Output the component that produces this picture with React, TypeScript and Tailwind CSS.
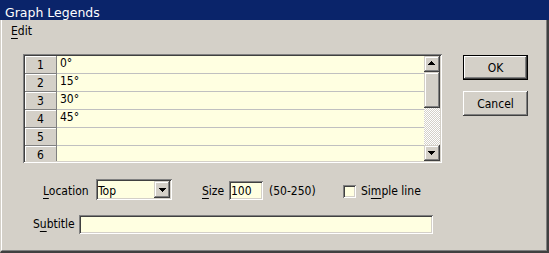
import React from "react";

const SUNKEN =
  "shadow-[inset_1px_1px_#808080,inset_-1px_-1px_#ffffff,inset_2px_2px_#404040,inset_-2px_-2px_#d4d0c8]";
const RAISED_BTN =
  "shadow-[inset_-1px_-1px_#404040,inset_1px_1px_#ffffff,inset_-2px_-2px_#808080,inset_2px_2px_#d4d0c8]";
const RAISED_SCROLL =
  "shadow-[inset_-1px_-1px_#404040,inset_1px_1px_#d4d0c8,inset_-2px_-2px_#808080,inset_2px_2px_#ffffff]";

const UpArrow = () => (
  <svg width="7" height="4" viewBox="0 0 7 4" className="block">
    <path d="M3 0H4V1H5V2H6V3H7V4H0V3H1V2H2V1H3Z" fill="#000" />
  </svg>
);

const DownArrow = () => (
  <svg width="7" height="4" viewBox="0 0 7 4" className="block">
    <path d="M0 0H7V1H6V2H5V3H4V4H3V3H2V2H1V1H0Z" fill="#000" />
  </svg>
);

export default function App() {
  const rows = ["0°", "15°", "30°", "45°", "", ""];
  return (
    <div className="w-[549px] h-[253px] bg-[#d4d0c8] flex flex-col overflow-hidden text-[12px] text-black font-['DejaVu_Sans_Condensed','DejaVu_Sans',sans-serif] font-stretch-condensed">
      <div className="h-[20px] shrink-0 bg-[#0a246a] text-white pl-[5px] pt-[5px] text-[12.5px] leading-[15px] font-['DejaVu_Sans',sans-serif] font-stretch-normal overflow-hidden">
        Graph Legends
      </div>
      <div className="flex-1 flex flex-col border-l border-l-[#d4d0c8] border-r-2 border-r-[#404040] border-b-2 border-b-[#404040]">
        <div className="flex-1 flex flex-col border-l border-l-white border-r border-r-[#808080] border-b border-b-[#808080]">
          <div className="h-[20px] shrink-0 pt-[4px] pl-[9px] leading-[14px]">
            <span className="underline underline-offset-[3px]">E</span>dit
          </div>

          <div className="flex items-start mt-[14px]">
            <div className={`ml-[21px] w-[419px] h-[109px] p-[2px] bg-[#d4d0c8] flex overflow-hidden ${SUNKEN}`}>
              <div className="flex-1 flex flex-col overflow-hidden">
                {rows.map((r, i) => (
                  <div key={i} className="flex h-[18px] shrink-0">
                    <div className="w-[32px] border-r border-b border-[#808080] shadow-[inset_1px_1px_#ffffff] flex justify-center pt-[3px] leading-[12px]">
                      {i + 1}
                    </div>
                    <div className="flex-1 border-b border-[#c0c0c0] bg-[#ffffe1] pl-[3px] pt-[1px] leading-[12px]">
                      {r}
                    </div>
                  </div>
                ))}
              </div>
              <div className="w-[16px] flex flex-col shrink-0">
                <div className={`h-[16px] shrink-0 bg-[#d4d0c8] pl-[4px] pt-[5px] ${RAISED_SCROLL}`}>
                  <UpArrow />
                </div>
                <div className={`h-[36px] shrink-0 bg-[#d4d0c8] ${RAISED_SCROLL}`} />
                <div className="flex-1 bg-[repeating-conic-gradient(#d4d0c8_0%_25%,#ffffff_0%_50%)] bg-[length:2px_2px]" />
                <div className={`h-[16px] shrink-0 bg-[#d4d0c8] pl-[4px] pt-[6px] ${RAISED_SCROLL}`}>
                  <DownArrow />
                </div>
              </div>
            </div>

            <div className="ml-[21px] mt-[1px] flex flex-col gap-[11px]">
              <div className={`w-[65px] h-[25px] border border-black bg-[#d4d0c8] flex items-center justify-center leading-[14px] ${RAISED_BTN}`}>
                OK
              </div>
              <div className={`w-[65px] h-[25px] bg-[#d4d0c8] flex items-center justify-center leading-[14px] ${RAISED_BTN}`}>
                Cancel
              </div>
            </div>
          </div>

          <div className="flex items-start mt-[16px] h-[21px] leading-[14px]">
            <div className="ml-[41px] w-[53px] mt-[5px] shrink-0">
              <span className="underline underline-offset-[3px]">L</span>ocation
            </div>
            <div className={`w-[76px] h-[21px] p-[2px] bg-[#ffffe1] flex shrink-0 ${SUNKEN}`}>
              <div className="flex-1 pt-[3px]">Top</div>
              <div className={`w-[16px] h-[17px] bg-[#d4d0c8] pl-[5px] pt-[7px] ${RAISED_SCROLL}`}>
                <DownArrow />
              </div>
            </div>
            <div className="ml-[30px] w-[27px] mt-[5px] shrink-0">
              <span className="underline underline-offset-[3px]">S</span>ize
            </div>
            <div className={`w-[34px] h-[19px] mt-[2px] px-[2px] pt-[3px] bg-[#ffffe1] shrink-0 ${SUNKEN}`}>
              100
            </div>
            <div className="ml-[6px] w-[74px] mt-[5px] shrink-0">(50-250)</div>
            <div className={`w-[13px] h-[13px] mt-[6px] bg-[#ffffe1] shrink-0 ${SUNKEN}`} />
            <div className="ml-[5px] mt-[5px]">
              Si<span className="underline underline-offset-[3px]">m</span>ple line
            </div>
          </div>

          <div className="flex items-start mt-[15px] leading-[14px]">
            <div className="ml-[31px] w-[46px] mt-[2px] shrink-0">
              S<span className="underline underline-offset-[3px]">u</span>btitle
            </div>
            <div className={`w-[354px] h-[19px] bg-[#ffffe1] shrink-0 ${SUNKEN}`} />
          </div>
        </div>
      </div>
    </div>
  );
}
